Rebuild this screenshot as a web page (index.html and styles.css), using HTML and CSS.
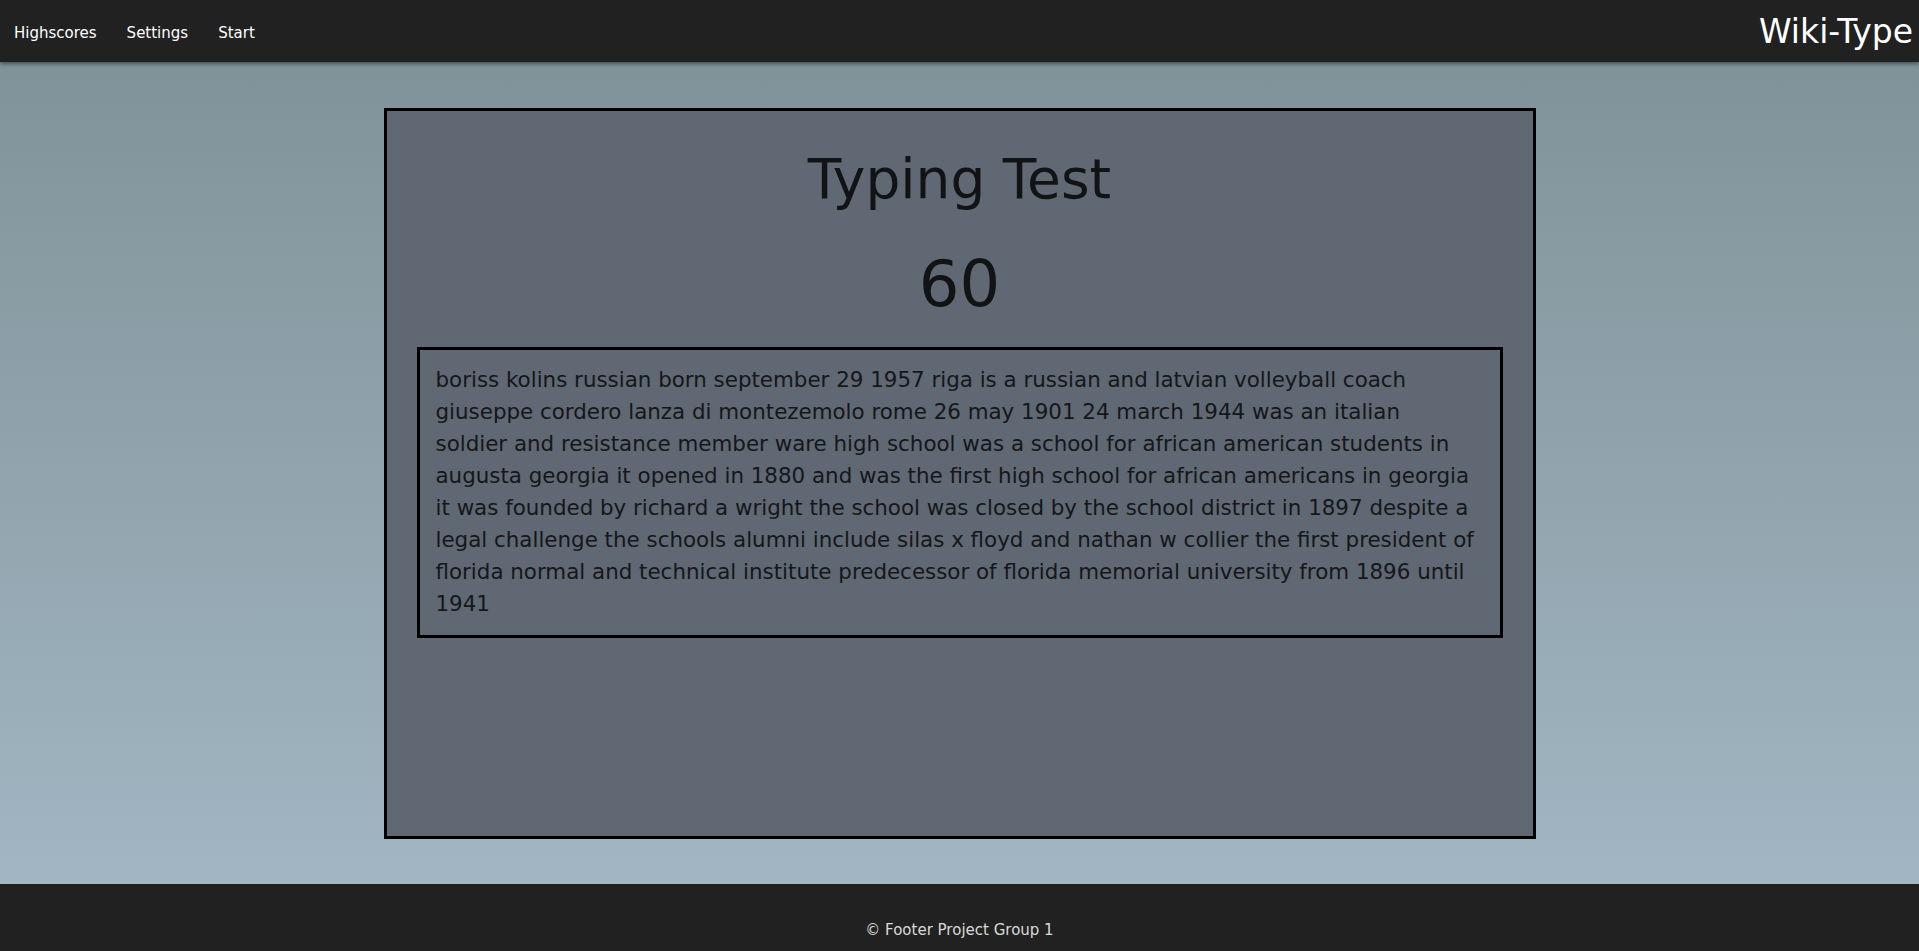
FILE: index.html
```html
<!DOCTYPE html>
<html lang="en">
<head>
<meta charset="utf-8">
<title>Wiki-Type</title>
<link rel="stylesheet" href="styles.css">
</head>
<body>
<header class="navbar">
  <nav class="nav-links">
    <a href="#" class="nav-link">Highscores</a>
    <a href="#" class="nav-link">Settings</a>
    <a href="#" class="nav-link">Start</a>
  </nav>
  <div class="brand">Wiki-Type</div>
</header>
<main class="main">
  <section class="card">
    <h1 class="title">Typing Test</h1>
    <div class="timer">60</div>
    <div class="text-box">
      <p class="text">boriss kolins russian born september 29 1957 riga is a russian and latvian volleyball coach<br>giuseppe cordero lanza di montezemolo rome 26 may 1901 24 march 1944 was an italian<br>soldier and resistance member ware high school was a school for african american students in<br>augusta georgia it opened in 1880 and was the first high school for african americans in georgia<br>it was founded by richard a wright the school was closed by the school district in 1897 despite a<br>legal challenge the schools alumni include silas x floyd and nathan w collier the first president of<br>florida normal and technical institute predecessor of florida memorial university from 1896 until<br>1941</p>
    </div>
  </section>
</main>
<footer class="footer">
  <p class="footer-text">© Footer Project Group 1</p>
</footer>
</body>
</html>
```
FILE: styles.css
```css
* { box-sizing: border-box; }
html, body { margin: 0; padding: 0; }
body {
  font-family: "DejaVu Sans", Verdana, sans-serif;
  min-height: 951px;
  display: flex;
  flex-direction: column;
  background: linear-gradient(to bottom, #7e9096 0%, #a4b9c6 100%);
}
.navbar {
  height: 62px;
  background: #212121;
  display: flex;
  align-items: center;
  justify-content: space-between;
  box-shadow: 0 2px 4px rgba(0,0,0,0.45);
  position: relative;
  z-index: 1;
}
.nav-links {
  display: flex;
  gap: 30px;
  padding-left: 14px;
  padding-top: 3px;
}
.nav-link {
  color: #ffffff;
  text-decoration: none;
  font-size: 15px;
}
.brand {
  color: #ffffff;
  font-size: 33px;
  padding-right: 6px;
}
.main {
  flex: 1;
  padding: 46px 0 45px;
  display: flex;
  justify-content: center;
}
.card {
  width: 1152px;
  height: 731px;
  background: #5f6873;
  border: 3px solid #000;
  padding: 0 30px;
  color: #111315;
}
.title {
  margin: 28px 0 0;
  text-align: center;
  font-weight: normal;
  font-size: 55px;
  line-height: 80px;
}
.timer {
  text-align: center;
  font-size: 64px;
  line-height: 100px;
  margin-top: 15px;
}
.text-box {
  margin-top: 13px;
  border: 3px solid #000;
  padding: 14px 16px 15px;
}
.text {
  margin: 0;
  font-size: 21.4px;
  line-height: 32px;
  color: #15171a;
}
.footer {
  height: 67px;
  background: #212121;
  display: flex;
  align-items: flex-end;
  justify-content: center;
}
.footer-text {
  margin: 0 0 12px;
  color: #d9d9d9;
  font-size: 15px;
}
```
